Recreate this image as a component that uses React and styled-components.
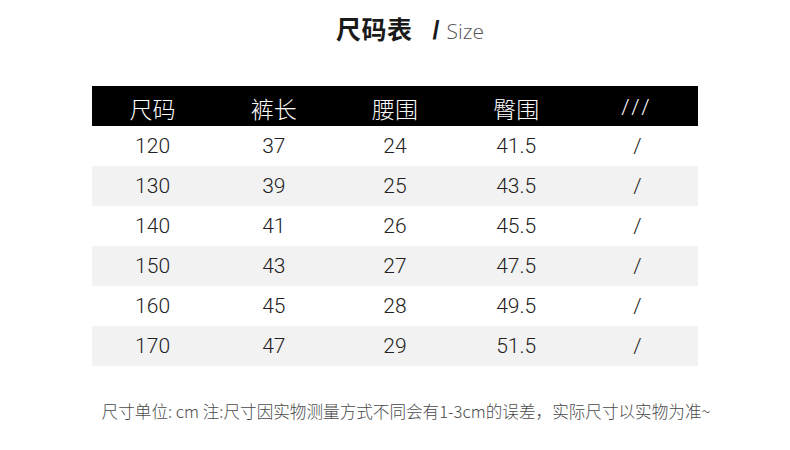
import React from "react";
import styled, { createGlobalStyle } from "styled-components";

const Global = createGlobalStyle`
  html, body { margin: 0; padding: 0; background: #fff; }
  body { font-family: "Noto Sans CJK SC", "Noto Sans", sans-serif; }
`;

const Page = styled.div`
  width: 790px;
  height: 450px;
  box-sizing: border-box;
  padding-top: 10px;
  display: flex;
  flex-direction: column;
  align-items: center;
`;

const Title = styled.div`
  display: flex;
  align-items: baseline;
  height: 40px;
  margin-left: 30px;
`;

const TitleMain = styled.span`
  font-size: 25px;
  font-weight: 700;
  color: #1a1a1a;
  letter-spacing: 0.5px;
`;

const TitleSlash = styled.span`
  font-family: "Liberation Sans", sans-serif;
  font-size: 25px;
  font-weight: 700;
  color: #1a1a1a;
  margin-left: 20px;
`;

const TitleSub = styled.span`
  font-family: "Open Sans", sans-serif;
  font-size: 21px;
  font-weight: 300;
  color: #555;
  margin-left: 7px;
`;

const Table = styled.div`
  margin-top: 36px;
  width: 606px;
  display: flex;
  flex-direction: column;
`;

const Row = styled.div`
  display: grid;
  grid-template-columns: repeat(5, 1fr);
  height: 40px;
  align-items: center;
  background: ${(p) => (p.$head ? "#000" : p.$alt ? "#f2f2f2" : "#fff")};
  color: ${(p) => (p.$head ? "#fff" : "#222")};
`;

const Cell = styled.div`
  text-align: center;
  font-family: ${(p) => (p.$cjk ? '"Noto Sans CJK SC", sans-serif' : 'Roboto, "Liberation Sans", sans-serif')};
  font-size: ${(p) => (p.$cjk ? "23px" : "21px")};
  font-weight: 300;
  line-height: 40px;
  letter-spacing: ${(p) => (p.$wide ? "4px" : "0")};
  padding-top: ${(p) => (p.$cjk ? "2px" : "0")};
`;

const Note = styled.div`
  margin-top: 33px;
  margin-left: 22px;
  font-size: 16.6px;
  color: #4a4a4a;
  font-weight: 300;
  white-space: nowrap;
`;

const heads = ["尺码", "裤长", "腰围", "臀围", "///"];
const rows = [
  ["120", "37", "24", "41.5", "/"],
  ["130", "39", "25", "43.5", "/"],
  ["140", "41", "26", "45.5", "/"],
  ["150", "43", "27", "47.5", "/"],
  ["160", "45", "28", "49.5", "/"],
  ["170", "47", "29", "51.5", "/"],
];

export default function App() {
  return (
    <>
      <Global />
      <Page>
        <Title>
          <TitleMain>尺码表</TitleMain>
          <TitleSlash>/</TitleSlash>
          <TitleSub>Size</TitleSub>
        </Title>
        <Table>
          <Row $head>
            {heads.map((h, i) => (
              <Cell key={i} $cjk={i < 4} $wide={i === 4}>{h}</Cell>
            ))}
          </Row>
          {rows.map((r, i) => (
            <Row key={i} $alt={i % 2 === 1}>
              {r.map((c, j) => (
                <Cell key={j}>{c}</Cell>
              ))}
            </Row>
          ))}
        </Table>
        <Note>尺寸单位: cm 注:尺寸因实物测量方式不同会有1-3cm的误差，实际尺寸以实物为准~</Note>
      </Page>
    </>
  );
}
